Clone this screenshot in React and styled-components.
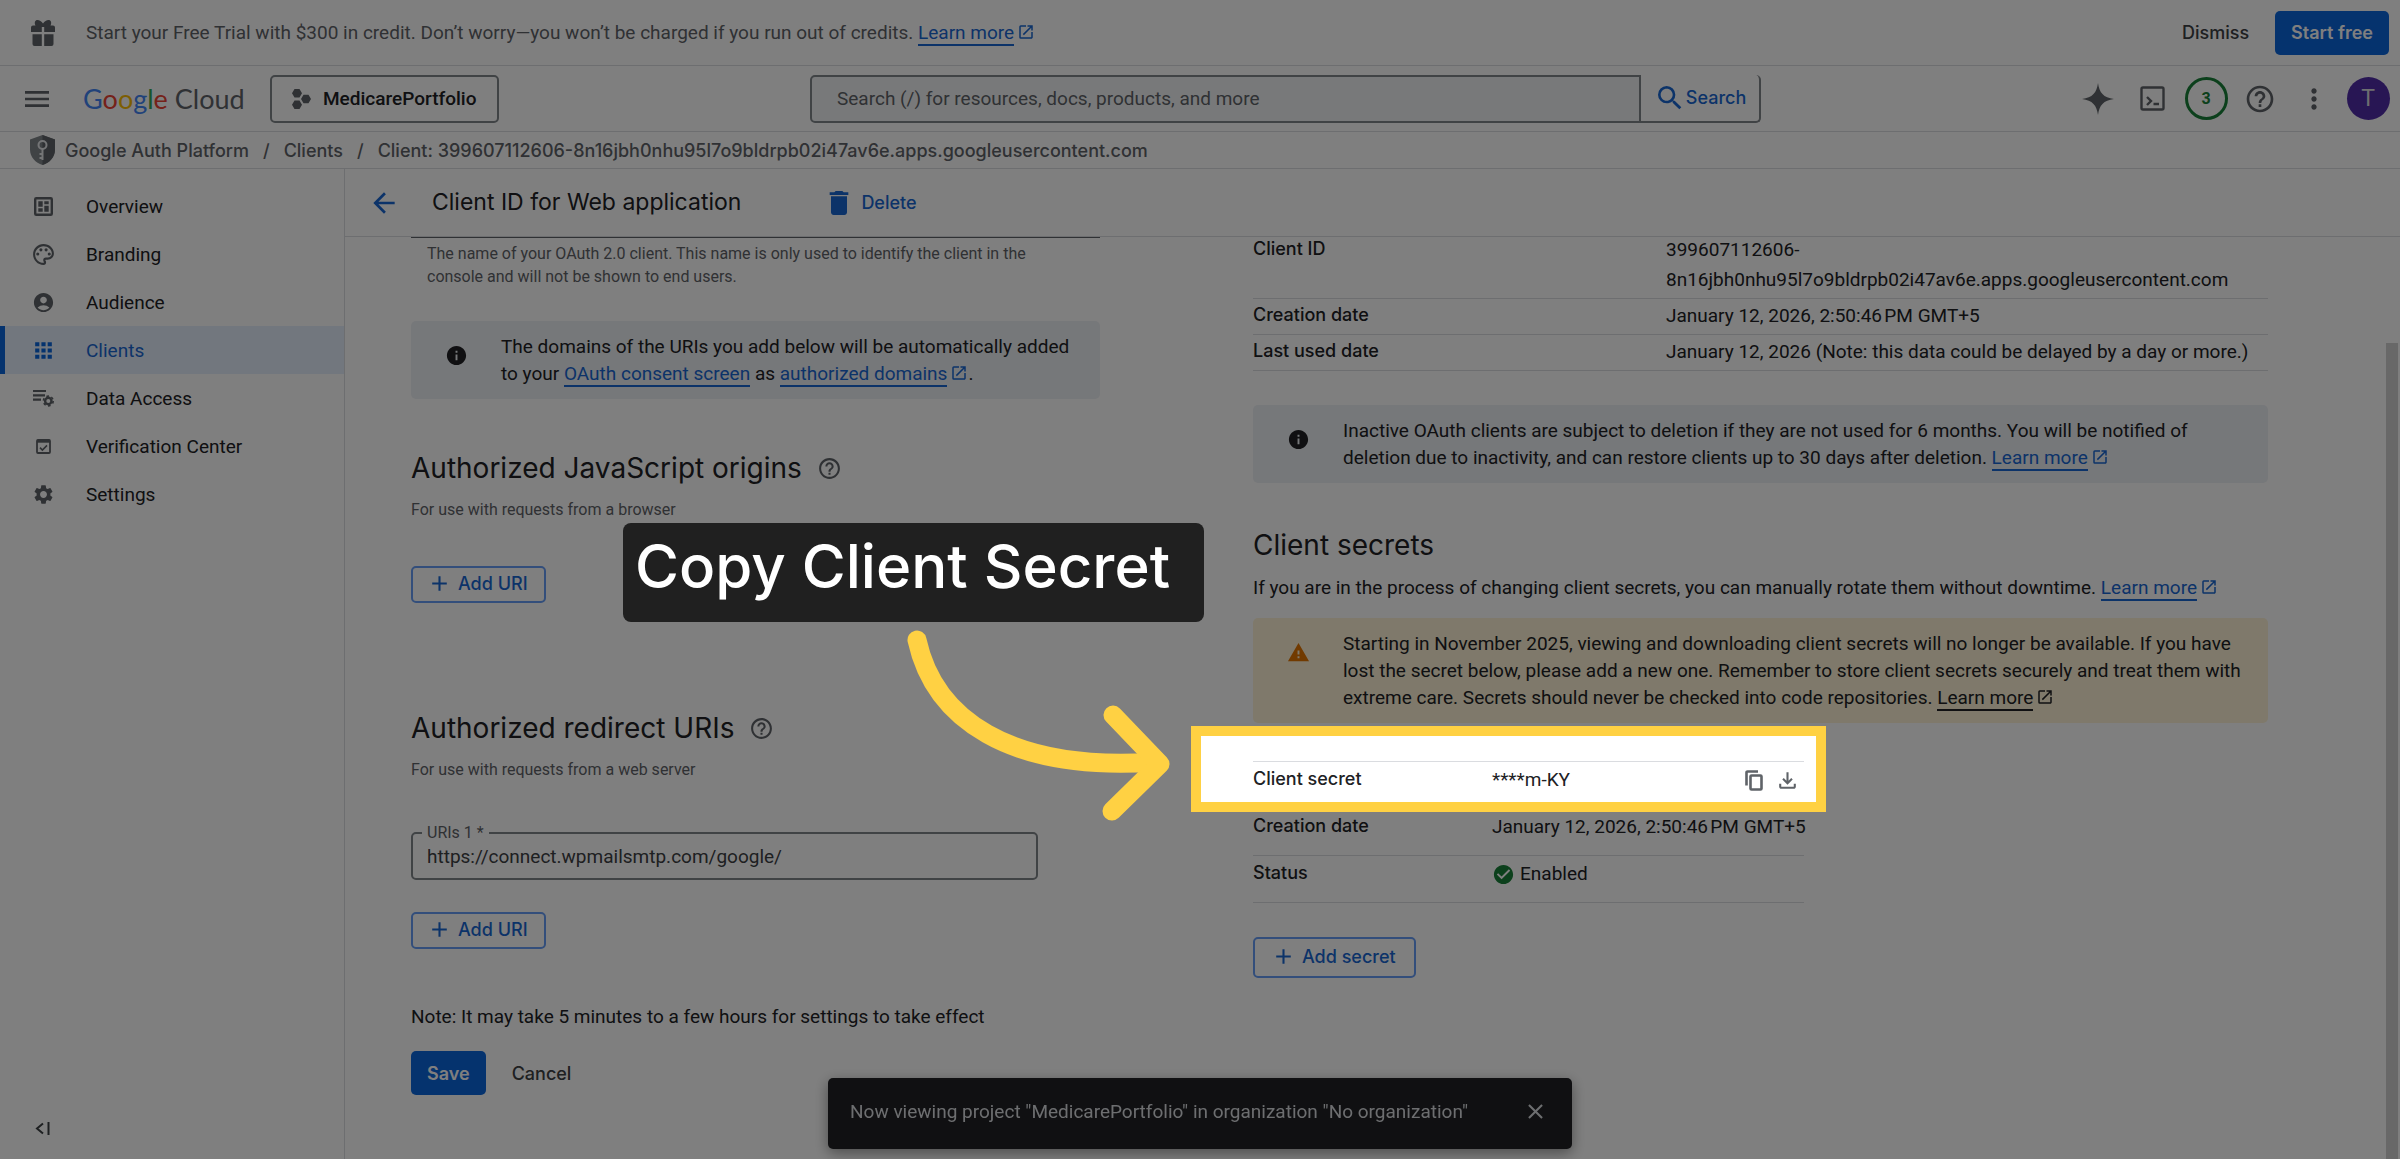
import React, { useState } from 'react';
import styled, { createGlobalStyle, css } from 'styled-components';
import {
    MdAccountCircle,
    MdAdd,
    MdApps,
    MdArrowBack,
    MdCheckCircle,
    MdClose,
    MdDelete,
    MdHelpOutline,
    MdInfo,
    MdMenu,
    MdMoreVert,
    MdOpenInNew,
    MdOutlineFileDownload,
    MdOutlinePalette,
    MdSearch,
    MdSettings,
    MdWarning,
} from 'react-icons/md';

const CLIENT_ID = '399607112606-8n16jbh0nhu95l7o9bldrpb02i47av6e.apps.googleusercontent.com';
const CREATED_AT = 'January 12, 2026, 2:50:46\u202fPM GMT+5';

/* Icons the package does not have */
const GiftIcon = () => (
    <svg width="26" height="26" viewBox="0 0 26 26" fill="currentColor" aria-hidden="true">
        <path d="M1 7.500a2 2 0 0 1 2-2h2.500C4 2.500 5 0 7.500 0 9.500 0 11.500 1.500 13 3.500 14.500 1.500 16.500 0 18.500 0 21 0 22 2.500 20.500 5.500H23a2 2 0 0 1 2 2V12H14.200V7h-2.400v5H1z" />
        <path d="M2.500 14.300h9.300V26H4.500a2 2 0 0 1-2-2zM14.200 14.300h9.300V24a2 2 0 0 1-2 2h-7.300z" />
    </svg>
);

const ProjectIcon = () => (
    <svg width="19" height="20" viewBox="0 0 19 20" fill="#5f6368" aria-hidden="true">
        <path d="M2.500 0h5L10 4.200 7.500 8.400h-5L0 4.200zM2.500 11.600h5l2.500 4.200-2.500 4.200h-5L0 15.800zM11.500 5.800h5L19 10l-2.500 4.200h-5L9 10z" />
    </svg>
);

const ShieldIcon = () => (
    <svg width="25" height="30" viewBox="0 0 25 30" aria-hidden="true">
        <path d="M12.500 0 25 4.500v10C25 22 19.500 28 12.500 30 5.500 28 0 22 0 14.500v-10z" fill="#80868b" />
        <path d="M12.500 0 25 4.500v10C25 22 19.500 28 12.500 30z" fill="#5f6368" />
        <circle cx="12.500" cy="10" r="4" fill="none" stroke="#e8eaed" strokeWidth="2" />
        <path d="M12.500 14v11M12.500 19H9.500M12.500 23H9.500" fill="none" stroke="#e8eaed" strokeWidth="2" />
    </svg>
);

const SparkleIcon = () => (
    <svg width="32" height="32" viewBox="0 0 32 32" fill="currentColor" aria-hidden="true">
        <path d="M16 0c1.200 9.500 5.500 14.800 16 16-10.500 1.200-14.800 6.500-16 16C14.800 22.500 10.500 17.200 0 16 10.500 14.800 14.800 9.500 16 0z" />
    </svg>
);

const TerminalIcon = () => (
    <svg width="25" height="25" viewBox="0 0 25 25" fill="none" stroke="currentColor" strokeWidth="2.400" aria-hidden="true">
        <rect x="1.500" y="1.500" width="22" height="22" rx="1.500" />
        <path d="m7 11 4 4-4 4M13.500 18H19" />
    </svg>
);

const OverviewIcon = () => (
    <svg width="19" height="19" viewBox="0 0 19 19" aria-hidden="true">
        <rect x="1.200" y="1.200" width="16.600" height="16.600" rx="1" fill="none" stroke="currentColor" strokeWidth="2.400" />
        <path d="M4.300 4.300h4.400v5.500H4.300zM4.300 11.300h4.400v3.400H4.300zM10.300 4.300h4.400v3H10.300zM10.300 8.800h4.400v5.900H10.300z" fill="currentColor" />
    </svg>
);

const DataAccessIcon = () => (
    <svg width="21" height="18" viewBox="0 0 21 18" aria-hidden="true">
        <path d="M0 2h13M0 6.300h12M0 10.600h8" stroke="currentColor" strokeWidth="2.200" fill="none" />
        <circle cx="15.300" cy="12" r="3.200" stroke="currentColor" strokeWidth="2.400" fill="none" />
        <circle cx="15.300" cy="12" r="4.900" stroke="currentColor" strokeWidth="1.600" strokeDasharray="2.600 2.530" fill="none" />
    </svg>
);

const VerificationIcon = () => (
    <svg width="15" height="15" viewBox="0 0 15 15" aria-hidden="true">
        <rect x="1" y="1" width="13" height="13" rx="1" fill="none" stroke="currentColor" strokeWidth="1.800" />
        <path d="M1 2.200h13" stroke="currentColor" strokeWidth="3" />
        <path d="m4 8.600 2.400 2.400L11 6.400" fill="none" stroke="currentColor" strokeWidth="1.600" />
    </svg>
);

const CollapseIcon = () => (
    <svg width="15" height="13" viewBox="0 0 15 13" fill="none" stroke="currentColor" strokeWidth="2" aria-hidden="true">
        <path d="M8 1.500 2 6.500l6 5M13.500 0v13" />
    </svg>
);

const CopyIcon = () => (
    <svg width="18" height="21" viewBox="0 0 18 21" fill="none" stroke="currentColor" strokeWidth="2.600" aria-hidden="true">
        <rect x="5.500" y="5.500" width="11" height="14" rx="1" />
        <path d="M1.500 15.500V2.500a1 1 0 0 1 1-1H13" />
    </svg>
);

const NAV_ITEMS = [
    { label: 'Overview', icon: <OverviewIcon /> },
    { label: 'Branding', icon: <MdOutlinePalette size={25} /> },
    { label: 'Audience', icon: <MdAccountCircle size={23} /> },
    { label: 'Clients', icon: <MdApps size={25} /> },
    { label: 'Data Access', icon: <DataAccessIcon /> },
    { label: 'Verification Center', icon: <VerificationIcon /> },
    { label: 'Settings', icon: <MdSettings size={23} /> },
];

const LearnMore = ({ children = 'Learn more', dark }) => (
    <TextLink href="#" $dark={dark}>
        <span>{children}</span>
        <MdOpenInNew size={18} />
    </TextLink>
);

const App = () => {
    const [query, setQuery] = useState('');
    const [uri, setUri] = useState('https://connect.wpmailsmtp.com/google/');

    return (
        <Page>
            <GlobalStyle />

            <PromoBar>
                <GiftIcon />
                <PromoText>
                    Start your Free Trial with $300 in credit. Don’t worry—you won’t be charged if you run out of credits.{' '}
                    <LearnMore />
                </PromoText>
                <GhostButton>Dismiss</GhostButton>
                <PrimaryButton>Start free</PrimaryButton>
            </PromoBar>

            <TopBar>
                <BrandGroup>
                    <IconButton aria-label="Main menu"><MdMenu size={32} /></IconButton>
                    <Brand href="#">
                        <Letter $color="#4285f4">G</Letter>
                        <Letter $color="#ea4335">o</Letter>
                        <Letter $color="#fbbc04">o</Letter>
                        <Letter $color="#4285f4">g</Letter>
                        <Letter $color="#34a853">l</Letter>
                        <Letter $color="#ea4335">e</Letter> Cloud
                    </Brand>
                    <ProjectButton>
                        <ProjectIcon />
                        MedicarePortfolio
                    </ProjectButton>
                </BrandGroup>
                <SearchForm onSubmit={(e) => e.preventDefault()}>
                    <SearchInput
                        type="text"
                        aria-label="Search"
                        placeholder="Search (/) for resources, docs, products, and more"
                        value={query}
                        onChange={(e) => setQuery(e.target.value)}
                    />
                    <SearchButton type="submit">
                        <MdSearch size={32} />
                        Search
                    </SearchButton>
                </SearchForm>
                <ActionGroup>
                    <IconButton $slot aria-label="Gemini"><SparkleIcon /></IconButton>
                    <IconButton $slot aria-label="Cloud Shell"><TerminalIcon /></IconButton>
                    <IconButton $slot aria-label="Notifications"><NoticeRing>3</NoticeRing></IconButton>
                    <IconButton $slot aria-label="Help"><MdHelpOutline size={32} /></IconButton>
                    <IconButton $slot aria-label="More"><MdMoreVert size={32} /></IconButton>
                    <IconButton $slot aria-label="Account"><Avatar>T</Avatar></IconButton>
                </ActionGroup>
            </TopBar>

            <Breadcrumb>
                <ShieldIcon />
                <Crumb href="#">Google Auth Platform</Crumb>
                <Slash>/</Slash>
                <Crumb href="#">Clients</Crumb>
                <Slash>/</Slash>
                <Crumb href="#">Client: {CLIENT_ID}</Crumb>
            </Breadcrumb>

            <Body>
                <Sidebar>
                    <nav>
                        {NAV_ITEMS.map(({ label, icon }) => (
                            <NavItem key={label} href="#" $active={label === 'Clients'}>
                                <NavIcon $active={label === 'Clients'}>{icon}</NavIcon>
                                {label}
                            </NavItem>
                        ))}
                    </nav>
                    <CollapseButton aria-label="Collapse navigation"><CollapseIcon /></CollapseButton>
                </Sidebar>

                <Main>
                    <PageHeader>
                        <IconButton $blue aria-label="Back"><MdArrowBack size={32} /></IconButton>
                        <PageTitle>Client ID for Web application</PageTitle>
                        <DeleteButton>
                            <MdDelete size={32} />
                            Delete
                        </DeleteButton>
                    </PageHeader>

                    <Scroller>
                        <Columns>
                            <section>
                                <FieldEdge />
                                <Hint>
                                    The name of your OAuth 2.0 client. This name is only used to identify the client in the
                                    console and will not be shown to end users.
                                </Hint>
                                <DomainsNotice>
                                    <MdInfo size={23} />
                                    <p>
                                        The domains of the URIs you add below will be automatically added to your{' '}
                                        <TextLink href="#"><span>OAuth consent screen</span></TextLink> as{' '}
                                        <LearnMore>authorized domains</LearnMore>.
                                    </p>
                                </DomainsNotice>

                                <OriginsHeading>
                                    Authorized JavaScript origins <MdHelpOutline size={25} />
                                </OriginsHeading>
                                <SubText>For use with requests from a browser</SubText>
                                <AddUriButton><MdAdd size={25} />Add URI</AddUriButton>

                                <RedirectHeading>
                                    Authorized redirect URIs <MdHelpOutline size={25} />
                                </RedirectHeading>
                                <SubText>For use with requests from a web server</SubText>
                                <UriField>
                                    <legend><label htmlFor="uri-1">URIs 1 *</label></legend>
                                    <input id="uri-1" type="text" value={uri} onChange={(e) => setUri(e.target.value)} />
                                </UriField>
                                <SecondUriButton><MdAdd size={25} />Add URI</SecondUriButton>

                                <Note>Note: It may take 5 minutes to a few hours for settings to take effect</Note>
                                <FormActions>
                                    <PrimaryButton>Save</PrimaryButton>
                                    <GhostButton>Cancel</GhostButton>
                                </FormActions>
                            </section>

                            <section>
                                <DetailsTable>
                                    <tbody>
                                        <tr>
                                            <th scope="row">Client ID</th>
                                            <td>399607112606-<wbr />8n16jbh0nhu95l7o9bldrpb02i47av6e.apps.googleusercontent.com</td>
                                        </tr>
                                        <tr>
                                            <th scope="row">Creation date</th>
                                            <td>{CREATED_AT}</td>
                                        </tr>
                                        <tr>
                                            <th scope="row">Last used date</th>
                                            <td>January 12, 2026 (Note: this data could be delayed by a day or more.)</td>
                                        </tr>
                                    </tbody>
                                </DetailsTable>

                                <InactiveNotice>
                                    <MdInfo size={23} />
                                    <p>
                                        Inactive OAuth clients are subject to deletion if they are not used for 6 months. You will
                                        be notified of deletion due to inactivity, and can restore clients up to 30 days after
                                        deletion. <LearnMore />
                                    </p>
                                </InactiveNotice>

                                <SecretsHeading>Client secrets</SecretsHeading>
                                <Paragraph>
                                    If you are in the process of changing client secrets, you can manually rotate them without
                                    downtime. <LearnMore />
                                </Paragraph>
                                <Notice $warning>
                                    <MdWarning size={23} />
                                    <p>
                                        Starting in November 2025, viewing and downloading client secrets will no longer be
                                        available. If you have lost the secret below, please add a new one. Remember to store
                                        client secrets securely and treat them with extreme care. Secrets should never be checked
                                        into code repositories. <LearnMore dark />
                                    </p>
                                </Notice>

                                <SecretTable>
                                    <tbody>
                                        <tr>
                                            <th scope="row">Client secret</th>
                                            <td>
                                                <SecretValue>
                                                    <span>****m-KY</span>
                                                    <IconButton aria-label="Copy secret"><CopyIcon /></IconButton>
                                                    <IconButton aria-label="Download secret"><MdOutlineFileDownload size={25} /></IconButton>
                                                </SecretValue>
                                            </td>
                                        </tr>
                                        <tr>
                                            <th scope="row">Creation date</th>
                                            <td>{CREATED_AT}</td>
                                        </tr>
                                        <tr>
                                            <th scope="row">Status</th>
                                            <td><Status><MdCheckCircle size={23} />Enabled</Status></td>
                                        </tr>
                                    </tbody>
                                </SecretTable>
                                <AddSecretButton><MdAdd size={25} />Add secret</AddSecretButton>
                            </section>
                        </Columns>
                        <ScrollTrack><ScrollThumb /></ScrollTrack>
                    </Scroller>
                </Main>
            </Body>

            <Snackbar role="status">
                Now viewing project "MedicarePortfolio" in organization "No organization"
                <SnackbarClose aria-label="Close"><MdClose size={25} /></SnackbarClose>
            </Snackbar>

            <Annotations>
                <Spotlight />
                <Callout>Copy Client Secret</Callout>
                <Arrow viewBox="0 0 270 200" aria-hidden="true">
                    <path d="M17 20C34 98 108 152 255 142" />
                    <path d="M213 95l47 49-48 47" />
                </Arrow>
            </Annotations>
        </Page>
    );
};

export default App;

/* Styled Components */
const display = 'Inter, Roboto, sans-serif';

const GlobalStyle = createGlobalStyle`
  * {
    box-sizing: border-box;
  }

  body {
    margin: 0;
    background: #fff;
    color: #202124;
    font-family: Roboto, Arial, sans-serif;
    font-size: 19px;
    line-height: 27px;
  }

  p, h1, h2 {
    margin: 0;
  }

  button, input {
    font: inherit;
  }

  svg {
    flex-shrink: 0;
  }
`;

const Page = styled.div`
  position: relative;
  display: flex;
  flex-direction: column;
  min-height: 100vh;
  overflow: hidden;
`;

const PromoBar = styled.div`
  display: flex;
  align-items: center;
  height: 66px;
  padding: 0 11px 0 30px;
  border-bottom: 1px solid #dadce0;
  color: #5f6368;
`;

const PromoText = styled.p`
  flex: 1;
  margin-left: 30px;
`;

const TextLink = styled.a`
  color: ${({ $dark }) => ($dark ? '#202124' : '#1967d2')};
  text-decoration: none;
  white-space: nowrap;

  span {
    border-bottom: 2px solid currentColor;
  }

  svg {
    margin-left: 3px;
    vertical-align: -2px;
  }
`;

const buttonBase = css`
  display: inline-flex;
  align-items: center;
  justify-content: center;
  padding: 0;
  border: none;
  background: none;
  color: inherit;
  cursor: pointer;
`;

const labelText = css`
  font-family: ${display};
  font-size: 18px;
  font-weight: 500;
`;

const PrimaryButton = styled.button`
  ${buttonBase}
  ${labelText}
  height: 44px;
  padding: 0 16px;
  border-radius: 5px;
  background: #0b66dc;
  color: #fff;
  font-weight: 600;
`;

const GhostButton = styled.button`
  ${buttonBase}
  ${labelText}
  height: 44px;
  padding: 0 26px;
  color: #3c4043;
`;

const IconButton = styled.button`
  ${buttonBase}
  width: ${({ $slot }) => ($slot ? '54px' : 'auto')};
  color: ${({ $blue }) => ($blue ? '#1967d2' : '#5f6368')};
`;

const OutlineButton = styled.button`
  ${buttonBase}
  ${labelText}
  height: 37px;
  gap: 6px;
  padding: 0 16px 2px 14px;
  border: 2px solid #669df6;
  border-radius: 5px;
  color: #1967d2;
`;

const TopBar = styled.header`
  display: grid;
  grid-template-columns: minmax(0, 810fr) minmax(0, 951fr) minmax(0, 639fr);
  align-items: center;
  height: 66px;
  border-bottom: 1px solid #dadce0;
`;

const BrandGroup = styled.div`
  display: flex;
  align-items: center;
  padding-left: 21px;
`;

const Brand = styled.a`
  width: 187px;
  margin-left: 30px;
  color: #5f6368;
  font-family: Lato, sans-serif;
  font-size: 27px;
  text-decoration: none;
  white-space: nowrap;
`;

const Letter = styled.span`
  color: ${({ $color }) => $color};
`;

const ProjectButton = styled.button`
  ${buttonBase}
  height: 48px;
  gap: 12px;
  padding: 0 21px 0 20px;
  border: 2px solid #80868b;
  border-radius: 5px;
  font-weight: 500;
`;

const SearchForm = styled.form`
  display: flex;
  height: 48px;
`;

const SearchInput = styled.input`
  flex: 1;
  min-width: 0;
  padding: 0 25px;
  border: 2px solid #80868b;
  border-radius: 5px 0 0 5px;
  background: #f1f3f4;
  outline: none;

  &::placeholder {
    color: #5f6368;
  }
`;

const SearchButton = styled.button`
  ${buttonBase}
  ${labelText}
  width: 120px;
  border: 2px solid #80868b;
  border-width: 0 2px 2px 0;
  border-radius: 0 5px 5px 0;
  color: #1967d2;
`;

const ActionGroup = styled.div`
  display: flex;
  justify-content: flex-end;
  padding-right: 5px;
`;

const NoticeRing = styled.span`
  display: flex;
  align-items: center;
  justify-content: center;
  width: 43px;
  height: 43px;
  border: 3px solid #188038;
  border-radius: 50%;
  color: #188038;
  font-size: 16px;
  font-weight: 700;
`;

const Avatar = styled.span`
  width: 43px;
  border-radius: 50%;
  background: #512da8;
  color: #dadce0;
  font-size: 23px;
  line-height: 43px;
`;

const Breadcrumb = styled.nav`
  ${labelText}
  display: flex;
  align-items: center;
  height: 37px;
  padding: 0 30px;
  border-bottom: 1px solid #dadce0;
  color: #5f6368;
`;

const Crumb = styled.a`
  color: inherit;
  text-decoration: none;

  svg + & {
    margin-left: 10px;
  }
`;

const Slash = styled.span`
  margin: 0 14px;
`;

const Body = styled.div`
  display: flex;
  flex: 1;
`;

const Sidebar = styled.aside`
  display: flex;
  flex-direction: column;
  justify-content: space-between;
  width: 345px;
  padding: 13px 0 24px;
  border-right: 1px solid #dadce0;
`;

const NavItem = styled.a`
  display: flex;
  align-items: center;
  height: 48px;
  padding-left: 24px;
  color: #202124;
  text-decoration: none;

  ${({ $active }) => $active && css`
    background: #e4eefc;
    box-shadow: inset 5px 0 #0b66dc;
    color: #1967d2;
  `}
`;

const NavIcon = styled.span`
  display: flex;
  justify-content: center;
  width: 38px;
  margin-right: 24px;
  color: ${({ $active }) => ($active ? '#0b66dc' : '#5f6368')};
`;

const CollapseButton = styled.button`
  ${buttonBase}
  width: 15px;
  margin-left: 35px;
  color: #3c4043;
`;

const Main = styled.main`
  display: flex;
  flex: 1;
  flex-direction: column;
  min-width: 0;
`;

const PageHeader = styled.div`
  display: flex;
  align-items: center;
  height: 68px;
  padding-left: 23px;
  border-bottom: 1px solid #dadce0;
`;

const PageTitle = styled.h1`
  margin-left: 32px;
  font-family: ${display};
  font-size: 23px;
  font-weight: 400;
`;

const DeleteButton = styled.button`
  ${buttonBase}
  ${labelText}
  gap: 6px;
  margin-left: 82px;
  color: #1967d2;
`;

const Scroller = styled.div`
  display: flex;
  flex: 1;
  overflow: hidden;
`;

const Columns = styled.div`
  display: grid;
  flex: 1;
  grid-template-columns: minmax(0, 689fr) minmax(0, 1015fr);
  gap: 153px;
  padding: 0 118px 60px 66px;
`;

const ScrollTrack = styled.div`
  display: flex;
  flex-direction: column;
  width: 14px;
  padding-top: 106px;
`;

const ScrollThumb = styled.div`
  flex: 1;
  width: 12px;
  background: #d0d0d0;
`;

const FieldEdge = styled.div`
  height: 1px;
  border-bottom: 1px solid #5f6368;
`;

const Hint = styled.p`
  padding: 4px 16px 0;
  color: #5f6368;
  font-size: 16px;
  line-height: 23px;
`;

const Notice = styled.div`
  display: grid;
  grid-template-columns: 56px 1fr;
  padding: 12px 20px 12px 34px;
  border-radius: 5px;
  background: ${({ $warning }) => ($warning ? '#fef3d6' : '#edf0f4')};

  > svg {
    margin-top: 11px;
    color: ${({ $warning }) => ($warning ? '#e37400' : 'inherit')};
  }
`;

const DomainsNotice = styled(Notice)`
  margin-top: 33px;
`;

const InactiveNotice = styled(Notice)`
  margin-top: 34px;
`;

const SectionHeading = styled.h2`
  display: flex;
  align-items: center;
  gap: 15px;
  font-family: ${display};
  font-size: 28px;
  font-weight: 400;
  line-height: 36px;

  svg {
    color: #5f6368;
  }
`;

const OriginsHeading = styled(SectionHeading)`
  margin-top: 51px;
`;

const RedirectHeading = styled(SectionHeading)`
  margin-top: 107px;
`;

const SecretsHeading = styled(SectionHeading)`
  margin-top: 44px;
`;

const SubText = styled.p`
  margin-top: 12px;
  color: #5f6368;
  font-size: 16px;
  line-height: 24px;
`;

const AddUriButton = styled(OutlineButton)`
  margin-top: 44px;
`;

const SecondUriButton = styled(OutlineButton)`
  margin-top: 32px;
`;

const AddSecretButton = styled(OutlineButton)`
  height: 41px;
  margin-top: 34px;
  padding: 0 18px 2px 16px;
`;

const UriField = styled.fieldset`
  width: 91%;
  height: 59px;
  margin: 39px 0 0;
  padding: 0 14px;
  border: 2px solid #80868b;
  border-radius: 5px;

  legend {
    padding: 0 5px;
    margin-left: -5px;
    color: #5f6368;
    font-size: 16px;
    line-height: 24px;
  }

  input {
    display: block;
    width: 100%;
    height: 22px;
    padding: 0;
    border: none;
    background: none;
    color: #3c4043;
    outline: none;
  }
`;

const Note = styled.p`
  margin-top: 54px;
`;

const FormActions = styled.div`
  display: flex;
  margin-top: 21px;
`;

const Paragraph = styled.p`
  margin: 11px 0 17px;
`;

const Table = styled.table`
  border-collapse: collapse;
  table-layout: fixed;

  th, td {
    border-bottom: 1px solid #dadce0;
    text-align: left;
    vertical-align: top;
  }

  th {
    ${labelText}
    line-height: 28px;
  }

  td {
    line-height: 30px;
  }
`;

const DetailsTable = styled(Table)`
  width: 100%;
  margin-top: -4px;

  th, td {
    padding: 2px 0 3px;
  }

  th {
    width: 413px;
  }
`;

const SecretTable = styled(Table)`
  width: 551px;
  margin-top: 38px;
  border-top: 1px solid #dadce0;

  th, td {
    padding: 3px 0 13px;
    white-space: nowrap;
  }

  th {
    width: 239px;
  }
`;

const SecretValue = styled.div`
  display: flex;
  align-items: center;
  gap: 12px;
  padding-right: 4px;

  span {
    flex: 1;
  }
`;

const Status = styled.span`
  display: flex;
  align-items: center;
  gap: 5px;

  svg {
    color: #188038;
  }
`;

const Snackbar = styled.div`
  position: fixed;
  bottom: 10px;
  left: 50%;
  display: flex;
  align-items: center;
  justify-content: space-between;
  width: 744px;
  height: 71px;
  padding: 0 24px 4px 22px;
  border-radius: 5px;
  background: #202124;
  box-shadow: 0 4px 14px rgba(0, 0, 0, 0.4);
  color: #dadce0;
  transform: translateX(-50%);
`;

const SnackbarClose = styled.button`
  ${buttonBase}
`;

/* Dims the page and points at one row of it */
const Annotations = styled.div`
  position: absolute;
  inset: 0;
  overflow: hidden;
  pointer-events: none;
`;

const Spotlight = styled.div`
  position: absolute;
  top: 726px;
  left: 1191px;
  width: 635px;
  height: 86px;
  border: 10px solid #ffd143;
  box-shadow: 0 0 0 3000px rgba(0, 0, 0, 0.5);
`;

const Callout = styled.div`
  position: absolute;
  top: 523px;
  left: 623px;
  width: 581px;
  height: 99px;
  padding: 0 12px;
  border-radius: 8px;
  background: #202020;
  color: #fff;
  font-family: ${display};
  font-size: 60px;
  font-weight: 500;
  line-height: 86px;
  white-space: nowrap;
`;

const Arrow = styled.svg`
  position: absolute;
  top: 620px;
  left: 900px;
  width: 270px;
  height: 200px;
  fill: none;
  stroke: #ffd143;
  stroke-width: 19px;
  stroke-linecap: round;
  stroke-linejoin: round;
  overflow: visible;
`;
